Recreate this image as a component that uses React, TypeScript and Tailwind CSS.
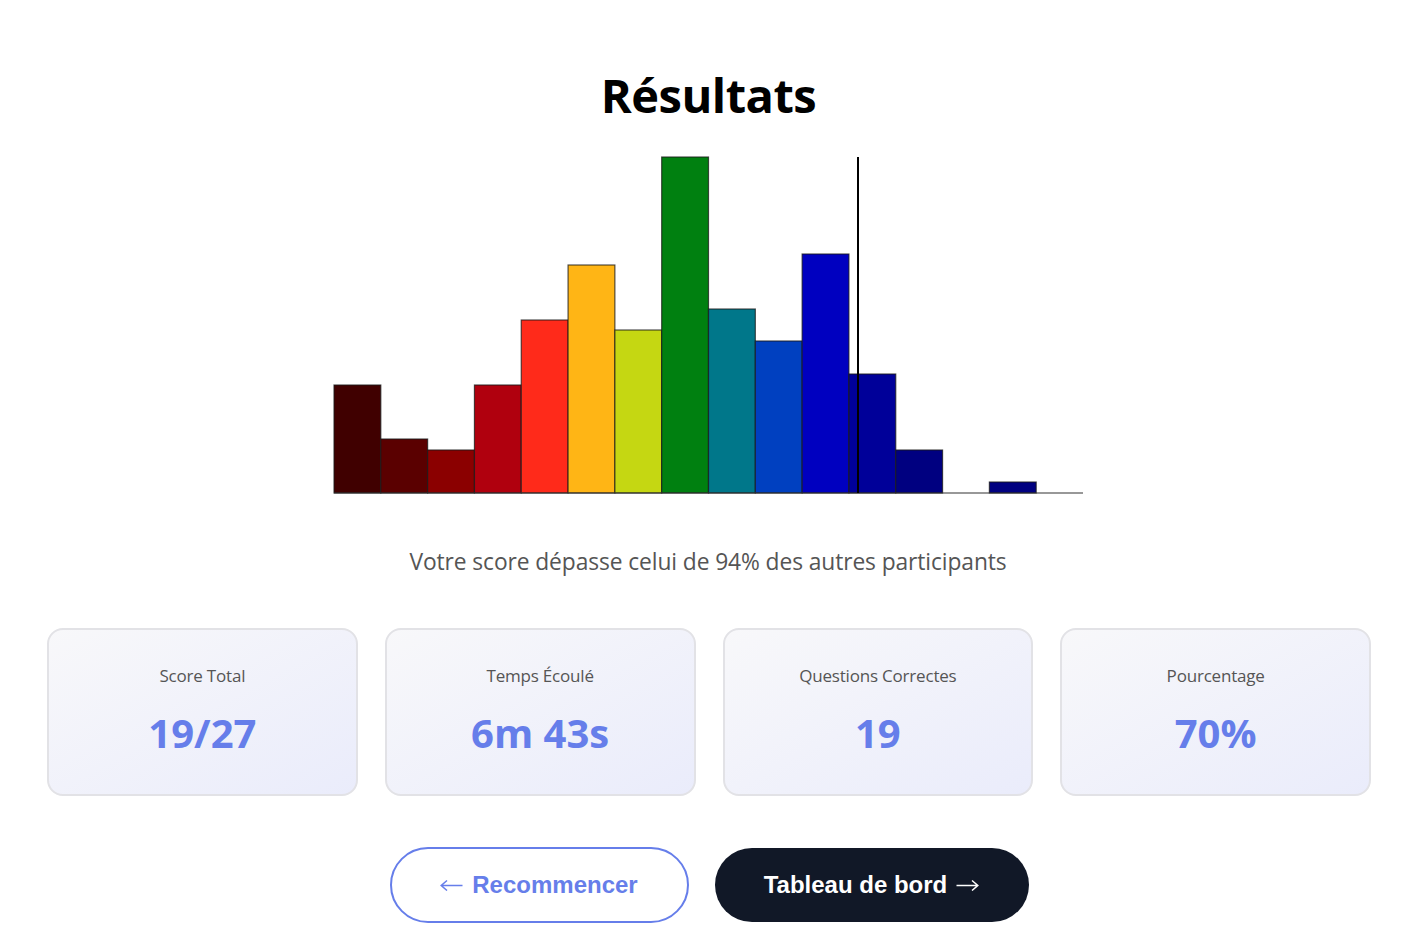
import React from 'react';

const bars = [
  { h: 108, c: '#400000' },
  { h: 54, c: '#5a0000' },
  { h: 43, c: '#8b0000' },
  { h: 108, c: '#b0000e' },
  { h: 173, c: '#ff2a1a' },
  { h: 228, c: '#ffb515' },
  { h: 163, c: '#c5d712' },
  { h: 336, c: '#008010' },
  { h: 184, c: '#00778a' },
  { h: 152, c: '#0040c0' },
  { h: 239, c: '#0000c0' },
  { h: 119, c: '#000099' },
  { h: 43, c: '#000080' },
  { h: 0, c: '#000080' },
  { h: 11, c: '#000080' },
  { h: 0, c: '#000080' },
];

const stats = [
  { label: 'Score Total', value: '19/27' },
  { label: 'Temps Écoulé', value: '6m 43s' },
  { label: 'Questions Correctes', value: '19' },
  { label: 'Pourcentage', value: '70%' },
];

const Histogram = () => {
  const bw = 749 / 16;
  const base = 337;
  return (
    <svg width="752" height="340" viewBox="0 0 752 340" className="block">
      {bars.map((b, i) =>
        b.h > 0 ? (
          <rect
            key={i}
            x={1 + i * bw}
            y={base - b.h}
            width={bw}
            height={b.h}
            fill={b.c}
            stroke="#1a1a1a"
            strokeOpacity="0.75"
            strokeWidth="1.2"
          />
        ) : null
      )}
      <line x1="1" y1={base} x2="750" y2={base} stroke="#333" strokeWidth="1.2" />
      <line x1="525" y1="1" x2="525" y2={base} stroke="#000" strokeWidth="2" />
    </svg>
  );
};

// thin text-style arrow, pointing right unless flipped
const Arrow = ({ left = false }: { left?: boolean }) => (
  <svg
    width="23"
    height="12"
    viewBox="0 0 23 12"
    className={left ? 'inline-block -scale-x-100' : 'inline-block'}
    fill="none"
    stroke="currentColor"
    strokeWidth="1.5"
  >
    <path d="M0.5 6.5H21.5M16 1.5L21.8 6.5L16 11.5" />
  </svg>
);

export default function App() {
  return (
    <div className="min-h-screen bg-white flex flex-col items-center pt-[66px] font-['Open_Sans',sans-serif]">
      <h1 className="ml-[5px] text-[47px] leading-[58px] font-bold text-black tracking-[-0.5px]">Résultats</h1>
      <div className="mt-[32px] ml-[5px]">
        <Histogram />
      </div>
      <p className="mt-[51px] ml-[4px] text-[22.8px] leading-[30px] text-[#555555] tracking-[-0.1px]">
        Votre score dépasse celui de 94% des autres participants
      </p>
      <div className="mt-[51px] w-full pl-[47px] pr-[41px] grid grid-cols-4 gap-[27px]">
        {stats.map((s) => (
          <div
            key={s.label}
            className="h-[168px] rounded-[16px] border-2 border-[#e2e2e6] bg-gradient-to-br from-[#f8f8fa] to-[#eaecfb] flex flex-col items-center"
          >
            <div className="mt-[33px] text-[17px] text-[#555555] tracking-[-0.2px]">{s.label}</div>
            <div className="mt-[19px] text-[40px] leading-[50px] font-bold text-[#667eea]">{s.value}</div>
          </div>
        ))}
      </div>
      <div className="mt-[51px] ml-[6px] flex gap-[26px] font-['Liberation_Sans',Arial,sans-serif]">
        <button className="w-[299px] h-[76px] rounded-full border-2 border-[#667eea] bg-white text-[#667eea] text-[24px] font-bold flex items-center justify-center gap-[9px]">
          <Arrow left />
          <span>Recommencer</span>
        </button>
        <button className="w-[314px] h-[74px] mt-[1px] rounded-full bg-[#111827] text-white text-[24px] font-bold flex items-center justify-center gap-[9px]">
          <span>Tableau de bord</span>
          <Arrow />
        </button>
      </div>
    </div>
  );
}
